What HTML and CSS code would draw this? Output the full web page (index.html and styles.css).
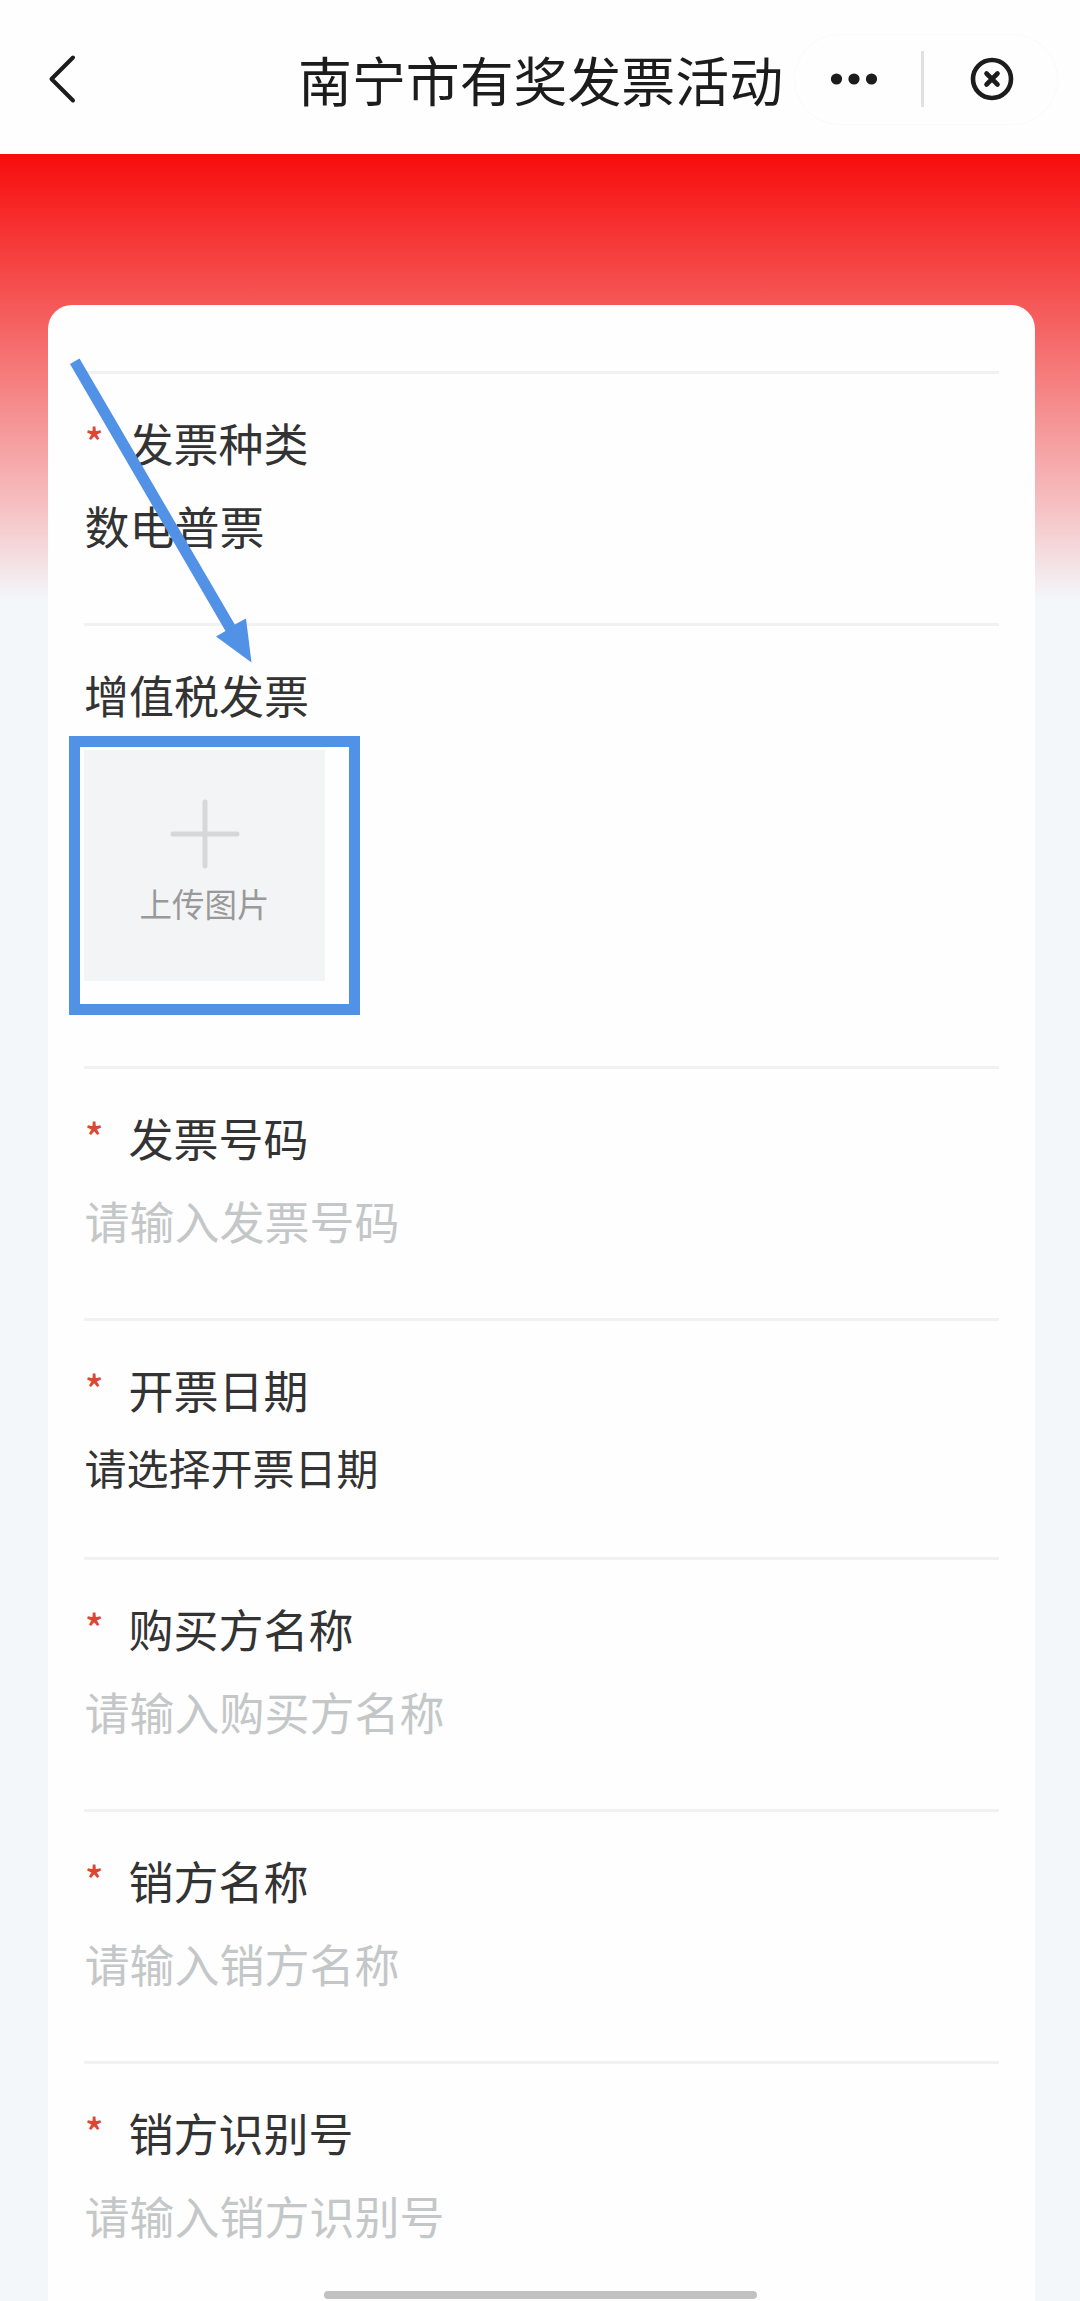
FILE: index.html
```html
<!DOCTYPE html>
<html lang="zh-CN">
<head>
  <meta charset="UTF-8" />
  <title>南宁市有奖发票活动</title>
  <link rel="stylesheet" href="styles.css">
</head>
<body>
  <header class="navbar">
    <svg class="back" width="32" height="56" viewBox="0 0 32 56">
      <path d="M25 6.500L3.500 28L25 49.500" />
    </svg>
    <h1>南宁市有奖发票活动</h1>
    <div class="capsule">
      <svg class="more" width="50" height="14" viewBox="0 0 50 14">
        <circle cx="7.500" cy="7" r="5.600" />
        <circle cx="25" cy="7" r="5.600" />
        <circle cx="42.500" cy="7" r="5.600" />
      </svg>
      <span class="split"></span>
      <svg class="close" width="44" height="44" viewBox="0 0 44 44">
        <circle cx="22" cy="22" r="19" />
        <path d="M16.500 16.500L27.500 27.500M27.500 16.500L16.500 27.500" />
      </svg>
    </div>
  </header>

  <main class="page">
    <form class="card">
      <div class="field">
        <label><span class="star">*</span>发票种类</label>
        <div class="value">数电普票</div>
      </div>

      <div class="field">
        <label>增值税发票</label>
        <div class="upload">
          <svg width="70" height="70" viewBox="0 0 70 70">
            <path d="M35 3V67M3 35H67" />
          </svg>
          <span>上传图片</span>
        </div>
      </div>

      <div class="field">
        <label><span class="star">*</span>发票号码</label>
        <div class="value placeholder">请输入发票号码</div>
      </div>

      <div class="field date">
        <label><span class="star">*</span>开票日期</label>
        <div class="value">请选择开票日期</div>
      </div>

      <div class="field">
        <label><span class="star">*</span>购买方名称</label>
        <div class="value placeholder">请输入购买方名称</div>
      </div>

      <div class="field">
        <label><span class="star">*</span>销方名称</label>
        <div class="value placeholder">请输入销方名称</div>
      </div>

      <div class="field">
        <label><span class="star">*</span>销方识别号</label>
        <div class="value placeholder">请输入销方识别号</div>
      </div>
    </form>
  </main>

  <!-- 操作指引 -->
  <div class="guide-box"></div>
  <svg class="guide-arrow" width="200" height="320" viewBox="60 350 200 320">
    <path d="M70 364L79.500 358.500L234.800 624.500L246 618.500L251.500 662.500L216 636.500L225.500 631Z" />
  </svg>
  <div class="home-bar"></div>
</body>
</html>
```
FILE: styles.css
```css
* {
  box-sizing: border-box;
}
body {
  margin: 0;
  position: relative;
  height: 2301px;
  overflow: hidden;
  background: #f3f7fa;
  color: #333;
  font-family: "Noto Sans CJK SC", sans-serif;
}

/* 顶部导航 */
.navbar {
  display: flex;
  align-items: center;
  height: 154px;
  padding: 4px 22px 0 48px;
  background: #fefefe;
}
.back {
  fill: none;
  stroke: #1c1c1c;
  stroke-width: 4;
  stroke-linecap: round;
  stroke-linejoin: round;
}
.navbar h1 {
  width: 486px;
  margin: 0 10px 0 218px;
  font-size: 53.900px;
  font-weight: 400;
  line-height: 80px;
  white-space: nowrap;
  color: #1c1c1c;
}
.capsule {
  display: flex;
  align-items: center;
  width: 264px;
  height: 91px;
  padding-left: 34px;
  border: 1px solid #fafafa;
  border-radius: 46px;
}
.more {
  fill: #1c1c1c;
}
.split {
  width: 3px;
  height: 56px;
  margin: 0 46px 0 42px;
  background: #e0e0e0;
}
.close {
  fill: none;
  stroke: #1c1c1c;
  stroke-width: 4.600;
  stroke-linecap: round;
}

/* 表单 */
.page {
  padding: 151px 45px 0 48px;
  background: linear-gradient(#f80c0c, #f55757 150px, #f6bcbe 345px, #f3f7fa 446px);
}
.card {
  height: 2040px;
  padding: 66px 36px 0 36px;
  background: #fefefe;
  border-radius: 24px 24px 0 0;
}
.field {
  padding: 37px 0 65px;
  border-top: 3px solid #f1f1f1;
}
.field label {
  display: flex;
  font-size: 45px;
  line-height: 64px;
}
.star {
  width: 44.500px;
  padding-left: 1px;
  font-size: 38px;
  font-weight: 500;
  line-height: 60px;
  color: #dc4632;
}
.value {
  margin-top: 19px;
  padding-left: .5px;
  font-size: 45px;
  line-height: 64px;
}
.placeholder {
  color: #c4c7c8;
}
.date {
  padding-bottom: 63.400px;
}
.date .value {
  margin-top: 18px;
  font-size: 42px;
  line-height: 54px;
}
.upload {
  display: flex;
  flex-direction: column;
  align-items: center;
  width: 241px;
  height: 231px;
  margin: 23px 0 20px;
  padding-top: 49px;
  background: #f3f4f6;
  font-size: 32.500px;
  line-height: 48px;
  color: #999;
}
.upload svg {
  fill: none;
  stroke: #d6d7d8;
  stroke-width: 5;
  stroke-linecap: round;
}
.upload span {
  margin-top: 10px;
}

/* 指引标注 */
.guide-box {
  position: absolute;
  left: 69px;
  top: 736px;
  width: 291px;
  height: 279px;
  border: 11px solid #5192e6;
}
.guide-arrow {
  position: absolute;
  left: 60px;
  top: 350px;
  fill: #5192e6;
}
.home-bar {
  position: absolute;
  left: 324px;
  bottom: 2px;
  width: 433px;
  height: 8px;
  border-radius: 4px;
  background: #c1c1c1;
}
```
